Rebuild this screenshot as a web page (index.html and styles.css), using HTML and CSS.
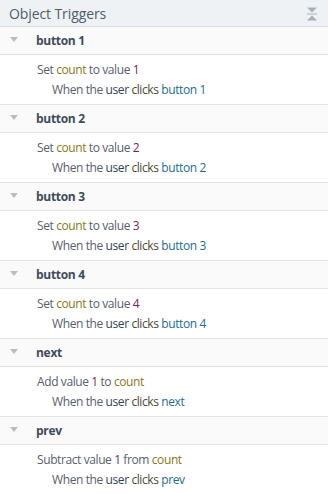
FILE: index.html
```html
<!DOCTYPE html>
<html>
<head>
<meta charset="utf-8">
<link rel="stylesheet" href="styles.css">
</head>
<body>
<div class="panel">
  <div class="panel-head">
    <span class="title">Object Triggers</span>
    <svg class="collapse" width="12" height="14" viewBox="0 0 12 14"><path d="M1 0.5h10L6 5.5z" fill="#a9b1b8"/><rect x="1" y="6.5" width="10" height="1" fill="#a9b1b8"/><path d="M1 13.5h10L6 8.5z" fill="#a9b1b8"/></svg>
  </div>

  <div class="group">
    <div class="group-head"><span class="tri"></span><span class="name">button 1</span></div>
    <div class="group-body">
      <div class="action">Set <span class="var">count</span> to value <span class="num">1</span></div>
      <div class="cond">When the <span class="usr">user</span> <span class="clk">clicks</span> <span class="obj">button 1</span></div>
    </div>
  </div>

  <div class="group">
    <div class="group-head"><span class="tri"></span><span class="name">button 2</span></div>
    <div class="group-body">
      <div class="action">Set <span class="var">count</span> to value <span class="num">2</span></div>
      <div class="cond">When the <span class="usr">user</span> <span class="clk">clicks</span> <span class="obj">button 2</span></div>
    </div>
  </div>

  <div class="group">
    <div class="group-head"><span class="tri"></span><span class="name">button 3</span></div>
    <div class="group-body">
      <div class="action">Set <span class="var">count</span> to value <span class="num">3</span></div>
      <div class="cond">When the <span class="usr">user</span> <span class="clk">clicks</span> <span class="obj">button 3</span></div>
    </div>
  </div>

  <div class="group">
    <div class="group-head"><span class="tri"></span><span class="name">button 4</span></div>
    <div class="group-body">
      <div class="action">Set <span class="var">count</span> to value <span class="num">4</span></div>
      <div class="cond">When the <span class="usr">user</span> <span class="clk">clicks</span> <span class="obj">button 4</span></div>
    </div>
  </div>

  <div class="group">
    <div class="group-head"><span class="tri"></span><span class="name">next</span></div>
    <div class="group-body">
      <div class="action">Add value <span class="num">1</span> to <span class="var">count</span></div>
      <div class="cond">When the <span class="usr">user</span> <span class="clk">clicks</span> <span class="obj">next</span></div>
    </div>
  </div>

  <div class="group">
    <div class="group-head"><span class="tri"></span><span class="name">prev</span></div>
    <div class="group-body">
      <div class="action">Subtract value <span class="num">1</span> from <span class="var">count</span></div>
      <div class="cond">When the <span class="usr">user</span> <span class="clk">clicks</span> <span class="obj">prev</span></div>
    </div>
  </div>
</div>
</body>
</html>
```

FILE: styles.css
```css
html, body {
  margin: 0;
  padding: 0;
  background: #ffffff;
}
body {
  font-family: "Open Sans", "Noto Sans", sans-serif;
  width: 328px;
  height: 494px;
  overflow: hidden;
}
.panel {
  display: flex;
  flex-direction: column;
}
.panel-head {
  height: 27px;
  box-sizing: border-box;
  background: #eef2f5;
  border-bottom: 1px solid #d9dde0;
  display: flex;
  align-items: center;
  justify-content: space-between;
  padding: 0 10px 0 9px;
}
.title {
  font-size: 14px;
  color: #4e5d6c;
  letter-spacing: -0.1px;
}
.collapse {
  display: block;
  margin-top: 1px;
}
.group-head {
  height: 28px;
  box-sizing: border-box;
  background: #fafafa;
  border-bottom: 1px solid #e3e3e3;
  display: flex;
  align-items: center;
  padding-left: 10px;
}
.tri {
  width: 0;
  height: 0;
  border-left: 4px solid transparent;
  border-right: 4px solid transparent;
  border-top: 5px solid #b9bdc1;
  margin-right: 18px;
  margin-top: -2px;
}
.name {
  font-size: 12px;
  font-weight: bold;
  color: #3e4c59;
  letter-spacing: -0.3px;
}
.group-body {
  height: 50px;
  box-sizing: border-box;
  border-bottom: 1px solid #e3e3e3;
  padding: 5px 0 0 37px;
  font-size: 12px;
  color: #56616c;
  letter-spacing: -0.4px;
  line-height: 20px;
}
.cond {
  padding-left: 15px;
}
.var { color: #8a7716; }
.num { color: #7a1f5b; }
.usr { color: #2f4656; }
.clk { color: #4a4a30; }
.obj { color: #1e6d8f; }
```
